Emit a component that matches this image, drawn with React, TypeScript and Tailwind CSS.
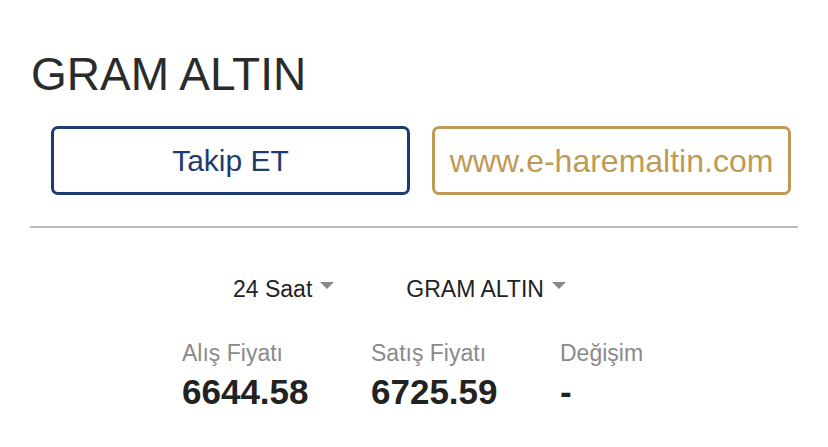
import React from "react";

interface PriceItem {
    label: string;
    value: string;
}

const prices: PriceItem[] = [
    { label: "Alış Fiyatı", value: "6644.58" },
    { label: "Satış Fiyatı", value: "6725.59" },
    { label: "Değişim", value: "-" },
];

function Caret() {
    return (
        <svg width="14" height="7" viewBox="0 0 14 7" className="ml-[8px] mt-[-9px]">
            <path d="M0 0 L14 0 L7 7 Z" fill="#8a8a8a" />
        </svg>
    );
}

function Dropdown({ label }: { label: string }) {
    return (
        <button className="flex items-center text-[23px] leading-none text-[#222]">
            <span>{label}</span>
            <Caret />
        </button>
    );
}

export default function App() {
    return (
        <div
            className="w-[828px] h-[447px] bg-white overflow-hidden px-[30px] pt-[51px]"
            style={{ fontFamily: '"Liberation Sans", Arial, sans-serif' }}
        >
            <h1 className="text-[46px] leading-none text-[#2b2b2b] pl-[1px]">GRAM ALTIN</h1>

            {/* action buttons */}
            <div className="flex gap-[22px] ml-[21px] mt-[29px]">
                <button className="w-[359px] h-[69px] rounded-[7px] border-[3px] border-[#1d3c6e] text-[#1d3c6e] text-[30px] flex items-center justify-center">
                    Takip ET
                </button>
                <button className="w-[359px] h-[69px] rounded-[7px] border-[3px] border-[#be9a55] text-[#be9a55] text-[32px] flex items-center justify-center">
                    www.e-haremaltin.com
                </button>
            </div>

            <div className="h-[2px] bg-[#bdbdbd] mt-[31px]" />

            {/* filters */}
            <div className="flex mt-[50px] pl-[203px] gap-[72px]">
                <Dropdown label="24 Saat" />
                <Dropdown label="GRAM ALTIN" />
            </div>

            {/* prices */}
            <div className="flex mt-[41px] pl-[152px]">
                {prices.map((p) => (
                    <div key={p.label} className="w-[189px] flex flex-col">
                        <span className="text-[23px] leading-none text-[#8a8a8a]">{p.label}</span>
                        <span className="text-[35px] leading-none font-bold text-[#222] mt-[9px]">{p.value}</span>
                    </div>
                ))}
            </div>
        </div>
    );
}
